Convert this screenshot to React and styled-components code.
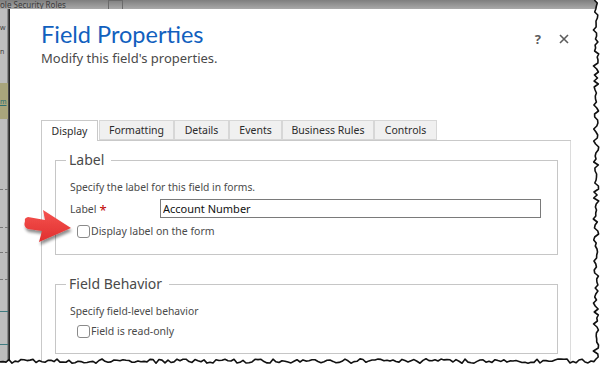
import React from "react";
import styled, { createGlobalStyle } from "styled-components";

const Global = createGlobalStyle`
  html, body { margin: 0; padding: 0; background: #fff; }
  body { font-family: "Noto Sans", "Open Sans", sans-serif; }
  * { box-sizing: border-box; }
`;

const Frame = styled.div`
  position: relative;
  width: 604px;
  height: 370px;
  overflow: hidden;
  background: #fff;
  display: flex;
  flex-direction: column;
`;

const TopBar = styled.div`
  height: 9px;
  flex: none;
  background: linear-gradient(to bottom, #7e7e7e, #a9a9a9);
  display: flex;
  align-items: center;
  font-family: "Noto Sans", sans-serif;
  font-size: 8px;
  line-height: 9px;
  color: #3a3a3a;
  overflow: hidden;
`;

const TopText = styled.span`
  white-space: nowrap;
`;

const TopBox = styled.span`
  width: 15px;
  height: 9px;
  margin-left: 42px;
  border: 1px solid #6a6a6a;
  border-bottom: none;
  align-self: flex-end;
`;

const Body = styled.div`
  flex: 1;
  display: flex;
  min-height: 0;
`;

const LeftStrip = styled.div`
  width: 10px;
  flex: none;
  background: linear-gradient(to right, #bdbdbd 0, #bdbdbd 7px, #5a5a5a 8px, #151515 10px);
  display: flex;
  flex-direction: column;
  font-size: 7px;
  color: #3c3c3c;
  overflow: hidden;
`;

const StripText = styled.span`
  display: block;
  width: 8px;
  white-space: nowrap;
  margin-top: ${(p) => p.$top}px;
  line-height: 10px;
`;

const StripBand = styled.div`
  width: 8px;
  height: 36px;
  margin-top: ${(p) => p.$top}px;
  background: #a9a57c;
  display: flex;
  align-items: center;
  font-size: 7px;
  color: #2e6f73;
  text-decoration: underline;
`;

const StripLine = styled.div`
  width: 8px;
  height: 0;
  margin-top: ${(p) => p.$top}px;
  border-top: 1px ${(p) => (p.$dashed ? "dashed" : "solid")} ${(p) => p.$color || "#777"};
`;

const Dialog = styled.div`
  flex: 1;
  background: #fff;
  display: flex;
  flex-direction: column;
  padding-left: 31px;
`;

const Header = styled.div`
  display: flex;
  align-items: flex-start;
  height: 111px;
  padding-top: 10px;
  padding-right: 35px;
`;

const Titles = styled.div`
  flex: 1;
  display: flex;
  flex-direction: column;
`;

const Title = styled.h1`
  margin: 0;
  font-family: "Lato", sans-serif;
  font-weight: 400;
  font-size: 23.5px;
  line-height: 30px;
  color: #1160be;
`;

const Subtitle = styled.p`
  margin: 0;
  font-size: 13px;
  line-height: 19px;
  color: #4a4a4a;
`;

const HeaderButtons = styled.div`
  display: flex;
  align-items: center;
  gap: 18px;
  padding-top: 13px;
  color: #5c5c5c;
  font-size: 13px;
  font-weight: 700;
  line-height: 14px;
`;

const IconBtn = styled.span`
  display: inline-flex;
  align-items: center;
  justify-content: center;
`;

const Tabs = styled.div`
  display: flex;
  height: 21px;
  width: 530px;
  border-bottom: 1px solid #c9c9c9;
`;

const Tab = styled.div`
  width: ${(p) => p.$w}px;
  height: ${(p) => (p.$active ? 21 : 20)}px;
  margin-right: ${(p) => (p.$active ? 1 : 0)}px;
  display: flex;
  align-items: center;
  justify-content: center;
  font-size: 10.5px;
  color: #2b2b2b;
  background: ${(p) => (p.$active ? "#fff" : "#f0f0f0")};
  border: 1px solid ${(p) => (p.$active ? "#c9c9c9" : "#d7d7d7")};
  border-bottom: ${(p) => (p.$active ? "none" : "1px solid #d7d7d7")};
  position: relative;
  z-index: ${(p) => (p.$active ? 1 : 0)};
  ${(p) => (p.$active ? "margin-bottom: -1px;" : "")}
`;

const Panel = styled.div`
  flex: 1;
  width: 530px;
  border-left: 1px solid #c9c9c9;
  border-right: 1px solid #dcdcdc;
  padding: 9px 0 0 13px;
  display: flex;
  flex-direction: column;
  gap: 19px;
`;

const Group = styled.fieldset`
  margin: 0;
  width: 503px;
  height: ${(p) => p.$h}px;
  border: 1px solid #c6c6c6;
  padding: 0 0 0 14px;
  display: flex;
  flex-direction: column;
`;

const Legend = styled.legend`
  margin-left: -4px;
  padding: 0 7px 0 3px;
  font-size: 14px;
  line-height: 20px;
  color: #4a4a4a;
`;

const Hint = styled.div`
  margin-top: ${(p) => p.$top}px;
  font-size: 10.3px;
  line-height: 14px;
  color: #4a4a4a;
`;

const FieldRow = styled.div`
  display: flex;
  align-items: center;
  margin-top: 5px;
  height: 19px;
`;

const FieldLabel = styled.label`
  width: 90px;
  font-size: 10.5px;
  color: #4a4a4a;
  display: flex;
  align-items: center;
`;

const Req = styled.span`
  color: #c00000;
  font-size: 13px;
  margin-left: 3px;
  line-height: 10px;
  transform: translateY(1px);
`;

const TextInput = styled.input`
  width: 381px;
  height: 19px;
  border: 1px solid #7a7a7a;
  padding: 0 2px;
  font-family: "Noto Sans", sans-serif;
  font-size: 11px;
  color: #111;
  outline: none;
`;

const CheckRow = styled.label`
  display: flex;
  align-items: center;
  margin-top: ${(p) => p.$top}px;
  margin-left: 7px;
  font-size: 10.5px;
  color: #4a4a4a;
  gap: 1px;
`;

const Box = styled.span`
  width: 13px;
  height: 13px;
  border: 1px solid #8a8a8a;
  border-radius: 3px;
  background: #fff;
  flex: none;
`;

const Overlay = styled.svg`
  position: absolute;
  left: 0;
  top: 0;
  pointer-events: none;
`;

function rnd(i) {
  const s = Math.sin(i * 12.9898 + 78.233) * 43758.5453;
  return s - Math.floor(s);
}

function tornPath() {
  const pts = [];
  for (let y = 0, i = 0; y <= 358; y += 3, i++) {
    pts.push([596 + (rnd(i) - 0.5) * 5.5, y]);
  }
  pts.push([596, 359]);
  for (let x = 594, i = 200; x >= 0; x -= 3, i++) {
    pts.push([x, 361 + (rnd(i) - 0.5) * 4.5]);
  }
  const line = pts.map((p, k) => `${k ? "L" : "M"}${p[0].toFixed(1)},${p[1].toFixed(1)}`).join(" ");
  const fill = `${line} L0,370 L604,370 L604,0 Z`;
  return { line, fill };
}

const torn = tornPath();

const tabs = [
  ["Display", 57, true],
  ["Formatting", 75],
  ["Details", 55],
  ["Events", 53],
  ["Business Rules", 92],
  ["Controls", 63],
];

export default function App() {
  return (
    <>
      <Global />
      <Frame>
        <TopBar>
          <TopText>ole Security Roles</TopText>
          <TopBox />
        </TopBar>
        <Body>
          <LeftStrip>
            <StripText $top={14}>w</StripText>
            <StripText $top={14}>n</StripText>
            <StripBand $top={26}>m</StripBand>
            <StripLine $top={70} $dashed />
            <StripLine $top={37} $dashed />
            <StripLine $top={24} $dashed />
            <StripLine $top={26} $dashed />
            <StripLine $top={31} $color="#3f7b80" />
            <StripLine $top={32} $color="#3f7b80" />
          </LeftStrip>
          <Dialog>
            <Header>
              <Titles>
                <Title>Field Properties</Title>
                <Subtitle>Modify this field's properties.</Subtitle>
              </Titles>
              <HeaderButtons>
                <IconBtn>?</IconBtn>
                <IconBtn>
                  <svg width="10" height="10" viewBox="0 0 10 10">
                    <path d="M1 1 L9 9 M9 1 L1 9" stroke="#5c5c5c" strokeWidth="1.6" />
                  </svg>
                </IconBtn>
              </HeaderButtons>
            </Header>
            <Tabs>
              {tabs.map(([t, w, a]) => (
                <Tab key={t} $w={w} $active={a}>
                  {t}
                </Tab>
              ))}
            </Tabs>
            <Panel>
              <Group $h={105}>
                <Legend>Label</Legend>
                <Hint $top={10}>Specify the label for this field in forms.</Hint>
                <FieldRow>
                  <FieldLabel>
                    Label<Req>*</Req>
                  </FieldLabel>
                  <TextInput defaultValue="Account Number" />
                </FieldRow>
                <CheckRow $top={6}>
                  <Box />
                  Display label on the form
                </CheckRow>
              </Group>
              <Group $h={80}>
                <Legend>Field Behavior</Legend>
                <Hint $top={10}>Specify field-level behavior</Hint>
                <CheckRow $top={6}>
                  <Box />
                  Field is read-only
                </CheckRow>
              </Group>
            </Panel>
          </Dialog>
        </Body>
        <Overlay width="604" height="370" viewBox="0 0 604 370">
          <defs>
            <filter id="sh" x="-30%" y="-30%" width="160%" height="160%">
              <feGaussianBlur in="SourceAlpha" stdDeviation="1.5" />
              <feOffset dx="1" dy="3" result="b" />
              <feComponentTransfer>
                <feFuncA type="linear" slope="0.45" />
              </feComponentTransfer>
              <feMerge>
                <feMergeNode />
                <feMergeNode in="SourceGraphic" />
              </feMerge>
            </filter>
            <linearGradient id="rg" x1="0" y1="0" x2="0" y2="1">
              <stop offset="0" stopColor="#f5524f" />
              <stop offset="1" stopColor="#e0302f" />
            </linearGradient>
          </defs>
          <path
            d="M25,221 Q24,218 28,217 L45,220 L43,210 L71,228 L39,242 L42,231 L28,229 Q23,227 25,221 Z"
            fill="url(#rg)"
            filter="url(#sh)"
          />
          <path d={torn.fill} fill="#fff" />
          <path d={torn.line} fill="none" stroke="#111" strokeWidth="1.6" strokeLinejoin="round" />
        </Overlay>
      </Frame>
    </>
  );
}
